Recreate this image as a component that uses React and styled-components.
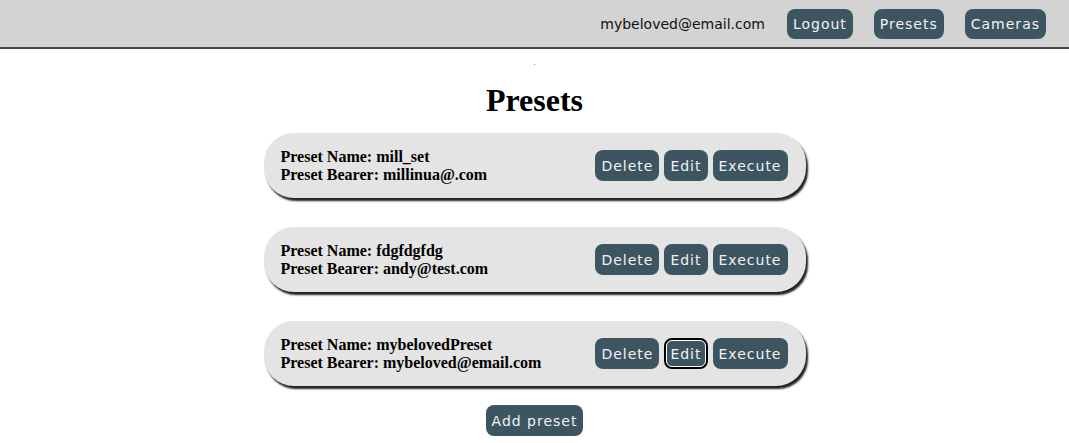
import styled, { createGlobalStyle } from 'styled-components';

const GlobalStyle = createGlobalStyle`
  body {
    margin: 0;
    background: #ffffff;
    font-family: "Liberation Serif", serif;
  }
`;

const Header = styled.header`
  height: 47px;
  background: #d3d3d3;
  border-bottom: 2px solid #4a4a4a;
  display: flex;
  align-items: center;
  justify-content: flex-end;
  gap: 21px;
  padding-right: 23px;
`;

const Email = styled.span`
  font-family: "DejaVu Sans", sans-serif;
  font-size: 14px;
  color: #111;
  margin-right: 1px;
`;

const Button = styled.button`
  background: #3d5561;
  color: #f2f2f2;
  border: ${(p) => (p.$focused ? '2px solid #000' : 'none')};
  outline: ${(p) => (p.$focused ? '1px solid #fff' : 'none')};
  outline-offset: -3px;
  border-radius: 8px;
  height: ${(p) => p.$h || 31}px;
  padding: 0 ${(p) => (p.$focused ? 4 : 6)}px;
  font-family: "DejaVu Sans", sans-serif;
  font-size: 14px;
  letter-spacing: 1px;
  cursor: pointer;
`;

const Main = styled.main`
  display: flex;
  flex-direction: column;
  align-items: center;
`;

const Dot = styled.div`
  width: 1px;
  height: 1px;
  background: #888;
  margin-top: 15px;
`;

const Title = styled.h1`
  font-family: "Liberation Serif", serif;
  font-size: 32px;
  font-weight: bold;
  margin: 17px 0 14px;
`;

const List = styled.div`
  display: flex;
  flex-direction: column;
  gap: 29px;
`;

const Card = styled.div`
  width: 542px;
  height: 65px;
  box-sizing: border-box;
  background: #e4e4e4;
  border-radius: 30px;
  box-shadow: 2px 3px 2px #222;
  display: flex;
  align-items: center;
  justify-content: space-between;
  padding: 0 18px 0 17px;
`;

const Info = styled.div`
  font-size: 16px;
  font-weight: bold;
  line-height: 18px;
  color: #000;
`;

const Actions = styled.div`
  display: flex;
  gap: 5px;
`;

const AddWrap = styled.div`
  margin-top: 19px;
`;

const presets = [
  { name: 'mill_set', bearer: 'millinua@.com' },
  { name: 'fdgfdgfdg', bearer: 'andy@test.com' },
  { name: 'mybelovedPreset', bearer: 'mybeloved@email.com', focused: true },
];

export default function App() {
  return (
    <>
      <GlobalStyle />
      <Header>
        <Email>mybeloved@email.com</Email>
        <Button $h={30}>Logout</Button>
        <Button $h={30}>Presets</Button>
        <Button $h={30}>Cameras</Button>
      </Header>
      <Main>
        <Dot />
        <Title>Presets</Title>
        <List>
          {presets.map((p) => (
            <Card key={p.name}>
              <Info>
                <div>Preset Name: {p.name}</div>
                <div>Preset Bearer: {p.bearer}</div>
              </Info>
              <Actions>
                <Button>Delete</Button>
                <Button $focused={p.focused}>Edit</Button>
                <Button>Execute</Button>
              </Actions>
            </Card>
          ))}
        </List>
        <AddWrap>
          <Button>Add preset</Button>
        </AddWrap>
      </Main>
    </>
  );
}
